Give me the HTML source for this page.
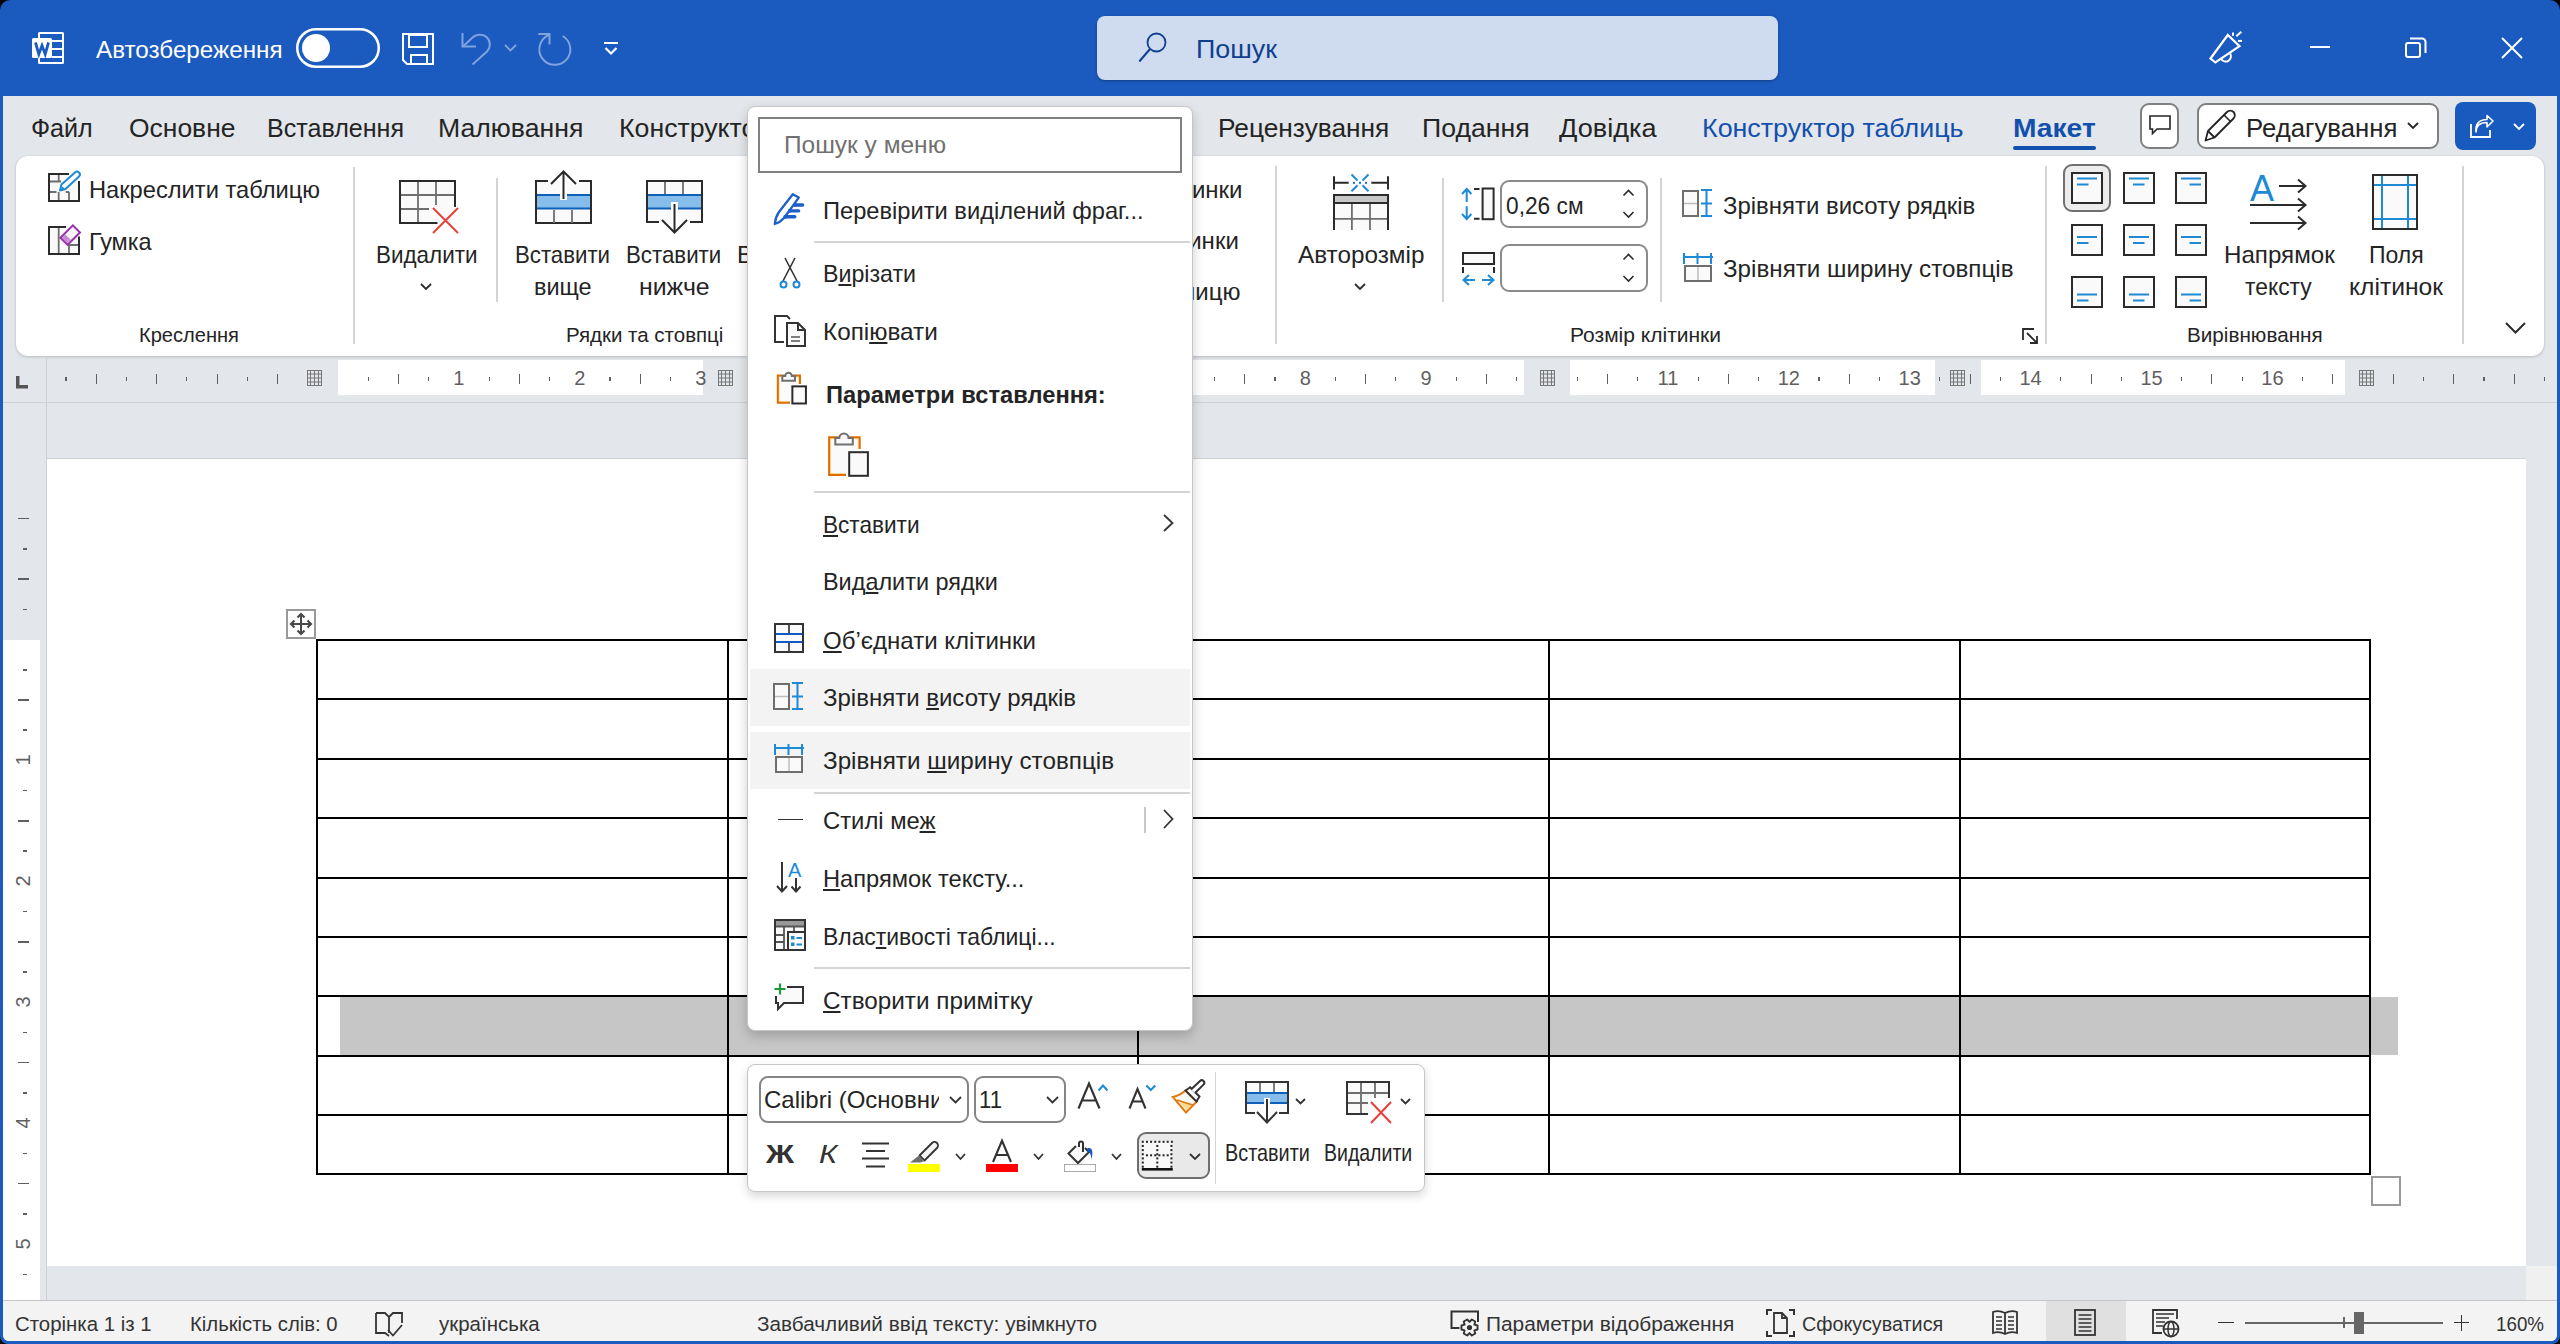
<!DOCTYPE html>
<html><head><meta charset="utf-8"><style>
html,body{margin:0;padding:0;width:2560px;height:1344px;overflow:hidden;background:#000;font-family:"Liberation Sans", sans-serif;}
.t{position:absolute;white-space:nowrap;line-height:1;transform-origin:0 0;}
u{text-decoration:underline;text-decoration-thickness:1.5px;text-underline-offset:2px;}
svg{overflow:visible}

</style></head><body>
<div style="position:absolute;left:0px;top:0px;width:2560px;height:1344px;background:#1b5abf;border-radius:10px 10px 8px 8px;"></div>
<div style="position:absolute;left:3px;top:96px;width:2554px;height:1245px;background:#e3e6ea;border-radius:0 0 6px 6px;overflow:hidden;"></div>
<svg style="position:absolute;left:32px;top:32px;" width="32" height="32" viewBox="0 0 32 32" fill="none">
<rect x="7" y="1" width="24" height="30" stroke="#fff" stroke-width="2" fill="none" rx="0.5"/>
<path d="M20 9 H31 M20 17 H31 M20 25 H31" stroke="#fff" stroke-width="2.2"/>
<rect x="0" y="6" width="20" height="20" rx="1.5" fill="#fff"/>
<path d="M3.5 10.5 L6.8 22.2 L10 13.5 L13.2 22.2 L16.5 10.5" stroke="#1b5abf" stroke-width="2.8" stroke-linejoin="miter" stroke-miterlimit="10"/>
</svg>
<div class="t" style="left:96px;top:38.18px;font-size:24px;color:#ffffff;font-weight:400;transform:scaleX(1.0085);">Автозбереження</div>
<svg style="position:absolute;left:296px;top:28px;" width="84" height="40" viewBox="0 0 84 40" fill="none"><rect x="1.25" y="1.25" width="81.5" height="37.5" rx="18.75" stroke="#fff" stroke-width="2.5"/>
<circle cx="20" cy="20" r="14" fill="#fff"/></svg>
<svg style="position:absolute;left:402px;top:33px;" width="32" height="32" viewBox="0 0 32 32" fill="none"><path d="M1 1 H31 V31 H5 L1 27 Z" stroke="#fff" stroke-width="2"/>
<rect x="7" y="2" width="18" height="12" stroke="#fff" stroke-width="2"/>
<path d="M9 31 V22 H25 V31" stroke="#fff" stroke-width="2"/></svg>
<svg style="position:absolute;left:461px;top:33px;" width="30" height="33" viewBox="0 0 30 33" fill="none"><path d="M1.5 0 V13.5 H15" stroke="#7fa3dc" stroke-width="2"/>
<path d="M2.5 13 L11 5 C15 1 22 0.5 26 4.5 C30 8.5 29.5 15 26 18.5 L11.5 31.5" stroke="#7fa3dc" stroke-width="2"/></svg>
<svg style="position:absolute;left:504px;top:44px;" width="13" height="8" viewBox="0 0 13 8" fill="none"><path d="M1 1 L6.5 6.5 L12 1" stroke="#7fa3dc" stroke-width="1.8"/></svg>
<svg style="position:absolute;left:537px;top:33px;" width="34" height="33" viewBox="0 0 34 33" fill="none"><path d="M1.3 1 H12.5 V11.5" stroke="#7fa3dc" stroke-width="2"/>
<path d="M12 2 A15.5 15.5 0 1 0 25.7 3" stroke="#7fa3dc" stroke-width="2"/></svg>
<svg style="position:absolute;left:604px;top:42px;" width="14" height="14" viewBox="0 0 14 14" fill="none"><line x1="0" y1="1" x2="14" y2="1" stroke="#fff" stroke-width="2"/>
<path d="M1.5 6 L7 11.5 L12.5 6" stroke="#fff" stroke-width="2.2"/></svg>
<div style="position:absolute;left:1097px;top:16px;width:681px;height:64px;background:#cfdcf0;border-radius:8px;box-shadow:0 1px 3px rgba(0,0,0,0.3);"></div>
<svg style="position:absolute;left:1138px;top:32px;" width="30" height="31" viewBox="0 0 30 31" fill="none"><circle cx="18.5" cy="10.5" r="9" stroke="#0f3f8f" stroke-width="1.8"/>
<line x1="12" y1="17" x2="1.3" y2="29.5" stroke="#0f3f8f" stroke-width="2"/></svg>
<div class="t" style="left:1196px;top:35.99px;font-size:26px;color:#0f3f8f;font-weight:400;transform:scaleX(1.0334);">Пошук</div>
<svg style="position:absolute;left:2209px;top:32px;" width="34" height="33" viewBox="0 0 34 33" fill="none"><path d="M1.5 26.5 L18.8 3 L30.5 14.1 L6.4 30.5 Z" stroke="#fff" stroke-width="2.2" stroke-linejoin="miter"/>
<path d="M12.2 27 A5 5 0 1 0 21.2 21.6" stroke="#fff" stroke-width="2"/>
<path d="M24 0.5 V3.8" stroke="#fff" stroke-width="2"/>
<path d="M27.3 4.3 L32.3 -0.2" stroke="#fff" stroke-width="2"/>
<path d="M29 8.9 H33" stroke="#fff" stroke-width="2"/></svg>
<div style="position:absolute;left:2310px;top:46px;width:20px;height:2px;background:#fff;"></div>
<svg style="position:absolute;left:2405px;top:37px;" width="22" height="22" viewBox="0 0 22 22" fill="none"><rect x="1" y="6" width="14" height="14" rx="2" stroke="#fff" stroke-width="2"/>
<path d="M5 1.5 H17 A3.5 3.5 0 0 1 20.5 5 V16" stroke="#fff" stroke-width="2"/></svg>
<svg style="position:absolute;left:2501px;top:37px;" width="22" height="22" viewBox="0 0 22 22" fill="none"><path d="M1 1 L21 21 M21 1 L1 21" stroke="#fff" stroke-width="2"/></svg>
<div class="t" style="left:31px;top:114.70px;font-size:26.7px;color:#242424;font-weight:400;transform:scaleX(0.9404);">Файл</div>
<div class="t" style="left:128.5px;top:114.70px;font-size:26.7px;color:#242424;font-weight:400;transform:scaleX(0.9912);">Основне</div>
<div class="t" style="left:266.5px;top:114.70px;font-size:26.7px;color:#242424;font-weight:400;transform:scaleX(0.9395);">Вставлення</div>
<div class="t" style="left:438px;top:114.70px;font-size:26.7px;color:#242424;font-weight:400;transform:scaleX(0.9979);">Малювання</div>
<div class="t" style="left:619px;top:114.70px;font-size:26.7px;color:#242424;font-weight:400;">Конструктор</div>
<div class="t" style="left:1218px;top:114.70px;font-size:26.7px;color:#242424;font-weight:400;transform:scaleX(0.9847);">Рецензування</div>
<div class="t" style="left:1422px;top:114.70px;font-size:26.7px;color:#242424;font-weight:400;transform:scaleX(0.9983);">Подання</div>
<div class="t" style="left:1558.5px;top:114.70px;font-size:26.7px;color:#242424;font-weight:400;transform:scaleX(1.0156);">Довідка</div>
<div class="t" style="left:1702.4px;top:114.70px;font-size:26.7px;color:#1250ae;font-weight:400;transform:scaleX(1.0054);">Конструктор таблиць</div>
<div class="t" style="left:2012.7px;top:114.70px;font-size:26.7px;color:#1250ae;font-weight:700;transform:scaleX(1.0560);">Макет</div>
<div style="position:absolute;left:2013px;top:146px;width:83px;height:4px;background:#1250ae;border-radius:2px;"></div>
<div style="position:absolute;left:2140px;top:103px;width:39px;height:46px;box-sizing:border-box;border:2px solid #808080;border-radius:9px;background:#fff;"></div>
<svg style="position:absolute;left:2149px;top:115px;" width="22" height="22" viewBox="0 0 22 22" fill="none"><path d="M1 1 H21 V14 H8 L3.5 18.5 V14 H1 Z" stroke="#242424" stroke-width="1.6" stroke-linejoin="miter"/></svg>
<div style="position:absolute;left:2197px;top:103px;width:242px;height:46px;box-sizing:border-box;border:2px solid #808080;border-radius:9px;background:#fff;"></div>
<svg style="position:absolute;left:2204px;top:110px;" width="32" height="32" viewBox="0 0 32 32" fill="none"><path d="M1.5 30.5 L4 21 L23 2 A3.5 3.5 0 0 1 29.5 8.5 L10.5 27.5 Z" stroke="#242424" stroke-width="1.8" stroke-linejoin="round"/>
<line x1="4" y1="21" x2="10.5" y2="27.5" stroke="#242424" stroke-width="1.8"/>
<line x1="20" y1="5" x2="26.5" y2="11.5" stroke="#242424" stroke-width="1.6"/></svg>
<div class="t" style="left:2245.6px;top:114.79px;font-size:26px;color:#242424;font-weight:400;transform:scaleX(0.9897);">Редагування</div>
<svg style="position:absolute;left:2407px;top:122px;" width="12" height="8" viewBox="0 0 12 8" fill="none"><path d="M1 1 L6 6 L11 1" stroke="#242424" stroke-width="1.8"/></svg>
<div style="position:absolute;left:2455px;top:102px;width:81px;height:48px;background:#185abd;border-radius:8px;"></div>
<svg style="position:absolute;left:2470px;top:115px;" width="24" height="23" viewBox="0 0 24 23" fill="none"><path d="M1 9 V22 H20 V15" stroke="#fff" stroke-width="1.8"/>
<path d="M6 17 C6 10 10 7.5 17 7.5 V12 L23 6 L17 0.5 V4.5 C9 4.5 5 9 6 17Z" stroke="#fff" stroke-width="1.6" stroke-linejoin="round"/></svg>
<svg style="position:absolute;left:2513px;top:123px;" width="12" height="8" viewBox="0 0 12 8" fill="none"><path d="M1 1 L6 6 L11 1" stroke="#fff" stroke-width="1.8"/></svg>
<div style="position:absolute;left:16px;top:156px;width:2528px;height:200px;background:#fff;border-radius:12px;box-shadow:0 1px 3px rgba(0,0,0,0.18),0 0 1px rgba(0,0,0,0.15);"></div>
<svg style="position:absolute;left:48px;top:173px;" width="33" height="30" viewBox="0 0 33 30" fill="none"><rect x="1" y="1" width="30" height="27" fill="#fafafa"/>
<path d="M21 1 H1 V28 H31 V8" stroke="#2b2b2b" stroke-width="2"/>
<path d="M10.7 2 V8.5 M2 8.5 H13 M2 19 H8.5 M10.7 19 V27 M17.7 19 H21 M21 19 V27" stroke="#6e6e6e" stroke-width="1.8"/>
<g transform="translate(-0.5,2.5)"><path d="M12.5 15 L14 9 L27.5 -3 A2.6 2.6 0 0 1 31.5 1 L18 13.5 Z" stroke="#1e8ad6" stroke-width="2" fill="#fff" stroke-linejoin="round"/>
<path d="M12.5 15 L15 11 L17 13 Z" fill="#1e8ad6"/></g></svg>
<div class="t" style="left:89px;top:178.08px;font-size:24px;color:#242424;font-weight:400;transform:scaleX(0.9861);">Накреслити таблицю</div>
<svg style="position:absolute;left:48px;top:226px;" width="33" height="29" viewBox="0 0 33 29" fill="none"><rect x="1" y="1" width="30" height="27" fill="#fafafa"/>
<path d="M18 1 H1 V28 H31 V10.5" stroke="#2b2b2b" stroke-width="2"/>
<path d="M10.7 2 V27 M21 19 H30 M21 19 V27" stroke="#6e6e6e" stroke-width="1.8"/>
<path d="M12.5 11.7 L24.9 -0.6 L32 6.5 L19.6 18.8 Z" stroke="#9b2fae" stroke-width="2" fill="#f6f6f6" stroke-linejoin="miter"/>
<path d="M14 11.7 L17.3 8.4 L22.7 13.8 L19.4 17.1 Z" fill="#c98ad6"/></svg>
<div class="t" style="left:89px;top:229.68px;font-size:24px;color:#242424;font-weight:400;transform:scaleX(0.9782);">Гумка</div>
<div class="t" style="left:139px;top:324.65px;font-size:20.5px;color:#242424;font-weight:400;transform:scaleX(0.9794);">Креслення</div>
<div style="position:absolute;left:353px;top:167px;width:2px;height:177px;background:#d4d4d4;"></div>
<svg style="position:absolute;left:399px;top:180px;" width="60" height="55" viewBox="0 0 60 55" fill="none"><rect x="1" y="1" width="55" height="42" fill="#fafafa"/>
<path d="M19 2 V42 M37 2 V25 M2 15 H55 M2 29 H30" stroke="#6e6e6e" stroke-width="1.8"/>
<path d="M56 27 V1 H1 V43 H38.5" stroke="#2b2b2b" stroke-width="2"/>
<path d="M34 28 L59 53 M59 28 L34 53" stroke="#e8403a" stroke-width="2"/></svg>
<div class="t" style="left:376px;top:243.38px;font-size:24px;color:#242424;font-weight:400;transform:scaleX(0.9348);">Видалити</div>
<svg style="position:absolute;left:420px;top:283px;" width="12" height="8" viewBox="0 0 12 8" fill="none"><path d="M1 1 L6 6 L11 1" stroke="#2b2b2b" stroke-width="1.8"/></svg>
<div style="position:absolute;left:496px;top:178px;width:2px;height:124px;background:#d4d4d4;"></div>
<svg style="position:absolute;left:535px;top:170px;" width="57" height="54" viewBox="0 0 57 54" fill="none"><rect x="1" y="11" width="55" height="42" fill="#fafafa"/><path d="M13 11 H1 V53 H56 V11 H44" stroke="#2b2b2b" stroke-width="2"/>
<rect x="2" y="25" width="53" height="14" fill="#86bdea"/>
<path d="M2 25 H55 M2 38.5 H55" stroke="#0d5fb8" stroke-width="2"/>
<path d="M19 40 V53 M37 40 V53" stroke="#6e6e6e" stroke-width="1.8"/>
<rect x="25" y="0" width="7" height="30" fill="#fff"/>
<path d="M28.5 2 V29 M16 14 L28.5 1.5 L41 14" stroke="#2b2b2b" stroke-width="2"/></svg>
<div class="t" style="left:515px;top:243.38px;font-size:24px;color:#242424;font-weight:400;transform:scaleX(0.9256);">Вставити</div>
<div class="t" style="left:534.4px;top:275.08px;font-size:24px;color:#242424;font-weight:400;transform:scaleX(0.9766);">вище</div>
<svg style="position:absolute;left:646px;top:180px;" width="57" height="54" viewBox="0 0 57 54" fill="none"><rect x="1" y="1" width="55" height="42" fill="#fafafa"/><path d="M13 42 H1 V1 H56 V42 H44" stroke="#2b2b2b" stroke-width="2"/>
<rect x="2" y="15" width="53" height="14" fill="#86bdea"/>
<path d="M2 15 H55 M2 28.5 H55" stroke="#0d5fb8" stroke-width="2"/>
<path d="M19 2 V14 M37 2 V14" stroke="#6e6e6e" stroke-width="1.8"/>
<rect x="25" y="22" width="7" height="32" fill="#fff"/>
<path d="M28.5 24 V52 M16 40 L28.5 52.5 L41 40" stroke="#2b2b2b" stroke-width="2"/></svg>
<div class="t" style="left:626.3px;top:243.38px;font-size:24px;color:#242424;font-weight:400;transform:scaleX(0.9276);">Вставити</div>
<div class="t" style="left:639.4px;top:275.08px;font-size:24px;color:#242424;font-weight:400;transform:scaleX(1.0337);">нижче</div>
<div class="t" style="left:737px;top:243.38px;font-size:24px;color:#242424;font-weight:400;">Вставити</div>
<div class="t" style="left:565.6px;top:324.65px;font-size:20.5px;color:#242424;font-weight:400;transform:scaleX(0.9992);">Рядки та стовпці</div>
<div class="t" style="left:1029.7px;top:177.68px;font-size:24px;color:#242424;font-weight:400;">Об’єднати клітинки</div>
<div class="t" style="left:1030.8px;top:228.68px;font-size:24px;color:#242424;font-weight:400;">Розділити клітинки</div>
<div class="t" style="left:1028.3px;top:280.28px;font-size:24px;color:#242424;font-weight:400;">Розділити таблицю</div>
<div style="position:absolute;left:1275px;top:166px;width:2px;height:178px;background:#d4d4d4;"></div>
<svg style="position:absolute;left:1332px;top:174px;" width="58" height="57" viewBox="0 0 58 57" fill="none"><path d="M2 2.2 V15.5 M56 2.2 V15.5 M2 8.8 H16.7 M39.3 8.8 H56" stroke="#2b2b2b" stroke-width="2"/>
<path d="M19.5 0.5 L25.5 6.5 M36.5 0.5 L30.5 6.5 M19.5 17.2 L25.5 11.2 M36.5 17.2 L30.5 11.2" stroke="#1e8ad6" stroke-width="2"/>
<rect x="21" y="7.8" width="2" height="2" fill="#0d6fc8"/><rect x="27" y="7.8" width="2" height="2" fill="#0d6fc8"/><rect x="33" y="7.8" width="2" height="2" fill="#0d6fc8"/>
<rect x="2" y="21" width="54" height="35" fill="#fafafa"/>
<rect x="2" y="21" width="54" height="8" fill="#c8c8c8"/>
<path d="M1 21.1 H57 M2 28.9 H56" stroke="#2b2b2b" stroke-width="2"/>
<path d="M2 20 V56 M56 20 V56" stroke="#2b2b2b" stroke-width="2"/>
<path d="M19.9 30 V56 M38 30 V56 M3 44.8 H55" stroke="#6e6e6e" stroke-width="1.8"/></svg>
<div class="t" style="left:1297.6px;top:243.08px;font-size:24px;color:#242424;font-weight:400;transform:scaleX(1.0119);">Авторозмір</div>
<svg style="position:absolute;left:1354px;top:283px;" width="12" height="8" viewBox="0 0 12 8" fill="none"><path d="M1 1 L6 6 L11 1" stroke="#2b2b2b" stroke-width="1.8"/></svg>
<div style="position:absolute;left:1442px;top:178px;width:2px;height:124px;background:#d4d4d4;"></div>
<svg style="position:absolute;left:1461px;top:187px;" width="34" height="34" viewBox="0 0 34 34" fill="none"><path d="M5.7 2.5 V15 M1 7 L5.7 2 L10.4 7 M5.7 19.2 V31.5 M1 27 L5.7 32 L10.4 27" stroke="#1e8ad6" stroke-width="2"/>
<path d="M13 2 H18.5 M13 31.7 H18.5" stroke="#2b2b2b" stroke-width="2"/>
<rect x="21.6" y="1.5" width="11" height="30.7" stroke="#2b2b2b" stroke-width="2" fill="#fafafa"/></svg>
<div style="position:absolute;left:1500px;top:180px;width:148px;height:48px;box-sizing:border-box;border:2px solid #8a8a8a;border-radius:9px;background:#fff;"></div>
<div class="t" style="left:1505.5px;top:193.98px;font-size:24px;color:#242424;font-weight:400;transform:scaleX(0.9465);">0,26 см</div>
<svg style="position:absolute;left:1622px;top:189px;" width="13" height="30" viewBox="0 0 13 30" fill="none"><path d="M1.5 6.5 L6.5 1.5 L11.5 6.5 M1.5 23 L6.5 28 L11.5 23" stroke="#2b2b2b" stroke-width="1.6"/></svg>
<svg style="position:absolute;left:1461px;top:252px;" width="34" height="33" viewBox="0 0 34 33" fill="none"><rect x="2" y="1" width="31" height="11" stroke="#2b2b2b" stroke-width="2" fill="#fafafa"/>
<path d="M2 15 V21 M33 15 V21" stroke="#2b2b2b" stroke-width="2"/>
<path d="M3 28 H14 M21 28 H32 M8 23 L2.5 28 L8 33 M27 23 L32.5 28 L27 33" stroke="#1e8ad6" stroke-width="2"/></svg>
<div style="position:absolute;left:1500px;top:244px;width:148px;height:48px;box-sizing:border-box;border:2px solid #8a8a8a;border-radius:9px;background:#fff;"></div>
<svg style="position:absolute;left:1622px;top:253px;" width="13" height="30" viewBox="0 0 13 30" fill="none"><path d="M1.5 6.5 L6.5 1.5 L11.5 6.5 M1.5 23 L6.5 28 L11.5 23" stroke="#2b2b2b" stroke-width="1.6"/></svg>
<div style="position:absolute;left:1660px;top:178px;width:2px;height:124px;background:#d4d4d4;"></div>
<svg style="position:absolute;left:1682px;top:188px;" width="31" height="30" viewBox="0 0 31 30" fill="none"><rect x="1" y="3" width="15" height="25" stroke="#6e6e6e" stroke-width="2" fill="#fafafa"/>
<path d="M2 15.5 H15" stroke="#bdbdbd" stroke-width="1.5"/>
<path d="M24.5 1 V29 M19 2 H30 M19 15.5 H30 M19 28 H30" stroke="#1e8ad6" stroke-width="2"/></svg>
<div class="t" style="left:1722.5px;top:193.68px;font-size:24px;color:#242424;font-weight:400;transform:scaleX(0.9969);">Зрівняти висоту рядків</div>
<svg style="position:absolute;left:1682px;top:252px;" width="31" height="30" viewBox="0 0 31 30" fill="none"><rect x="3" y="14" width="26" height="15" stroke="#6e6e6e" stroke-width="2" fill="#fafafa"/>
<path d="M16 15 V28" stroke="#bdbdbd" stroke-width="1.5"/>
<path d="M1 5 H31 M2 1 V12 M15.5 1 V12 M29 1 V12" stroke="#1e8ad6" stroke-width="2"/></svg>
<div class="t" style="left:1722.5px;top:257.18px;font-size:24px;color:#242424;font-weight:400;transform:scaleX(1.0079);">Зрівняти ширину стовпців</div>
<div class="t" style="left:1570px;top:324.95px;font-size:20.5px;color:#242424;font-weight:400;transform:scaleX(1.0245);">Розмір клітинки</div>
<svg style="position:absolute;left:2022px;top:328px;" width="17" height="16" viewBox="0 0 17 16" fill="none"><path d="M1 12 V1 H12 M5 5 L15 15 M8 15 H15 V8" stroke="#2b2b2b" stroke-width="1.8"/></svg>
<div style="position:absolute;left:2045px;top:166px;width:2px;height:178px;background:#d4d4d4;"></div>
<div style="position:absolute;left:2063px;top:164px;width:48px;height:48px;box-sizing:border-box;border:2px solid #707070;border-radius:9px;background:#ececec;"></div>
<svg style="position:absolute;left:2071px;top:172px;" width="32" height="32" viewBox="0 0 32 32" fill="none"><rect x="1" y="1" width="30" height="30" stroke="#2b2b2b" stroke-width="2" fill="#fafafa"/>
<path d="M6 6.5 H26 M6 12.5 H17.5" stroke="#1e8ad6" stroke-width="2"/></svg>
<svg style="position:absolute;left:2123px;top:172px;" width="32" height="32" viewBox="0 0 32 32" fill="none"><rect x="1" y="1" width="30" height="30" stroke="#2b2b2b" stroke-width="2" fill="#fafafa"/>
<path d="M6 6.5 H26 M10 12.5 H21.5" stroke="#1e8ad6" stroke-width="2"/></svg>
<svg style="position:absolute;left:2175px;top:172px;" width="32" height="32" viewBox="0 0 32 32" fill="none"><rect x="1" y="1" width="30" height="30" stroke="#2b2b2b" stroke-width="2" fill="#fafafa"/>
<path d="M6 6.5 H26 M14.5 12.5 H26" stroke="#1e8ad6" stroke-width="2"/></svg>
<svg style="position:absolute;left:2071px;top:224px;" width="32" height="32" viewBox="0 0 32 32" fill="none"><rect x="1" y="1" width="30" height="30" stroke="#2b2b2b" stroke-width="2" fill="#fafafa"/>
<path d="M6 13 H26 M6 19 H17.5" stroke="#1e8ad6" stroke-width="2"/></svg>
<svg style="position:absolute;left:2123px;top:224px;" width="32" height="32" viewBox="0 0 32 32" fill="none"><rect x="1" y="1" width="30" height="30" stroke="#2b2b2b" stroke-width="2" fill="#fafafa"/>
<path d="M6 13 H26 M10 19 H21.5" stroke="#1e8ad6" stroke-width="2"/></svg>
<svg style="position:absolute;left:2175px;top:224px;" width="32" height="32" viewBox="0 0 32 32" fill="none"><rect x="1" y="1" width="30" height="30" stroke="#2b2b2b" stroke-width="2" fill="#fafafa"/>
<path d="M6 13 H26 M14.5 19 H26" stroke="#1e8ad6" stroke-width="2"/></svg>
<svg style="position:absolute;left:2071px;top:276px;" width="32" height="32" viewBox="0 0 32 32" fill="none"><rect x="1" y="1" width="30" height="30" stroke="#2b2b2b" stroke-width="2" fill="#fafafa"/>
<path d="M6 18.5 H26 M6 24.5 H17.5" stroke="#1e8ad6" stroke-width="2"/></svg>
<svg style="position:absolute;left:2123px;top:276px;" width="32" height="32" viewBox="0 0 32 32" fill="none"><rect x="1" y="1" width="30" height="30" stroke="#2b2b2b" stroke-width="2" fill="#fafafa"/>
<path d="M6 18.5 H26 M10 24.5 H21.5" stroke="#1e8ad6" stroke-width="2"/></svg>
<svg style="position:absolute;left:2175px;top:276px;" width="32" height="32" viewBox="0 0 32 32" fill="none"><rect x="1" y="1" width="30" height="30" stroke="#2b2b2b" stroke-width="2" fill="#fafafa"/>
<path d="M6 18.5 H26 M14.5 24.5 H26" stroke="#1e8ad6" stroke-width="2"/></svg>
<svg style="position:absolute;left:2250px;top:172px;" width="58" height="58" viewBox="0 0 58 58" fill="none"><text x="0" y="28.5" font-family="Liberation Sans" font-size="36" fill="#1e8ad6">A</text>
<path d="M29 14 H55 M48 7.5 L55.5 14 L48 20.5" stroke="#2b2b2b" stroke-width="2"/>
<path d="M0 33 H55 M48 26.5 L55.5 33 L48 39.5" stroke="#2b2b2b" stroke-width="2"/>
<path d="M0 51 H55 M48 44.5 L55.5 51 L48 57.5" stroke="#2b2b2b" stroke-width="2"/></svg>
<div class="t" style="left:2224px;top:243.48px;font-size:24px;color:#242424;font-weight:400;transform:scaleX(1.0055);">Напрямок</div>
<div class="t" style="left:2245px;top:275.18px;font-size:24px;color:#242424;font-weight:400;transform:scaleX(0.9515);">тексту</div>
<svg style="position:absolute;left:2372px;top:174px;" width="46" height="56" viewBox="0 0 46 56" fill="none"><rect x="1" y="1" width="44" height="54" stroke="#2b2b2b" stroke-width="2" fill="#fafafa"/>
<path d="M10 2 V54 M36 2 V54 M2 11 H44 M2 45 H44" stroke="#1e8ad6" stroke-width="2"/></svg>
<div class="t" style="left:2368.6px;top:243.48px;font-size:24px;color:#242424;font-weight:400;transform:scaleX(0.9585);">Поля</div>
<div class="t" style="left:2349px;top:275.18px;font-size:24px;color:#242424;font-weight:400;transform:scaleX(1.0261);">клітинок</div>
<div class="t" style="left:2187px;top:325.15px;font-size:20.5px;color:#242424;font-weight:400;transform:scaleX(1.0091);">Вирівнювання</div>
<div style="position:absolute;left:2462px;top:166px;width:2px;height:178px;background:#d4d4d4;"></div>
<svg style="position:absolute;left:2505px;top:322px;" width="21" height="12" viewBox="0 0 21 12" fill="none"><path d="M1 1 L10.5 10.5 L20 1" stroke="#2b2b2b" stroke-width="2"/></svg>
<div style="position:absolute;left:46px;top:356px;width:1px;height:944px;background:#cfd0d2;"></div>
<div style="position:absolute;left:3px;top:402px;width:2554px;height:1px;background:#cfd0d2;"></div>
<svg style="position:absolute;left:16px;top:376px;" width="12" height="13" viewBox="0 0 12 13" fill="none"><path d="M0 0 H3.5 V9 H12 V12.5 H0 Z" fill="#555"/></svg>
<div style="position:absolute;left:338px;top:360px;width:365px;height:35px;background:#fff;"></div>
<div style="position:absolute;left:749px;top:360px;width:365px;height:35px;background:#fff;"></div>
<div style="position:absolute;left:1160px;top:360px;width:364px;height:35px;background:#fff;"></div>
<div style="position:absolute;left:1570px;top:360px;width:365px;height:35px;background:#fff;"></div>
<div style="position:absolute;left:1981px;top:360px;width:364px;height:35px;background:#fff;"></div>
<div style="position:absolute;left:65.4px;top:377px;width:1.2px;height:4px;background:#5f5f5f;"></div>
<div style="position:absolute;left:95.6px;top:373.5px;width:1.2px;height:10px;background:#5f5f5f;"></div>
<div style="position:absolute;left:125.8px;top:377px;width:1.2px;height:4px;background:#5f5f5f;"></div>
<div style="position:absolute;left:156.0px;top:373.5px;width:1.2px;height:10px;background:#5f5f5f;"></div>
<div style="position:absolute;left:186.3px;top:377px;width:1.2px;height:4px;background:#5f5f5f;"></div>
<div style="position:absolute;left:216.5px;top:373.5px;width:1.2px;height:10px;background:#5f5f5f;"></div>
<div style="position:absolute;left:246.7px;top:377px;width:1.2px;height:4px;background:#5f5f5f;"></div>
<div style="position:absolute;left:276.9px;top:373.5px;width:1.2px;height:10px;background:#5f5f5f;"></div>
<div style="position:absolute;left:367.6px;top:377px;width:1.2px;height:4px;background:#5f5f5f;"></div>
<div style="position:absolute;left:397.8px;top:373.5px;width:1.2px;height:10px;background:#5f5f5f;"></div>
<div style="position:absolute;left:428.1px;top:377px;width:1.2px;height:4px;background:#5f5f5f;"></div>
<div class="t" style="left:428.9px;top:368px;width:60px;text-align:center;font-size:20px;color:#5f5f5f;">1</div>
<div style="position:absolute;left:488.5px;top:377px;width:1.2px;height:4px;background:#5f5f5f;"></div>
<div style="position:absolute;left:518.8px;top:373.5px;width:1.2px;height:10px;background:#5f5f5f;"></div>
<div style="position:absolute;left:549.0px;top:377px;width:1.2px;height:4px;background:#5f5f5f;"></div>
<div class="t" style="left:549.8px;top:368px;width:60px;text-align:center;font-size:20px;color:#5f5f5f;">2</div>
<div style="position:absolute;left:609.4px;top:377px;width:1.2px;height:4px;background:#5f5f5f;"></div>
<div style="position:absolute;left:639.6px;top:373.5px;width:1.2px;height:10px;background:#5f5f5f;"></div>
<div style="position:absolute;left:669.9px;top:377px;width:1.2px;height:4px;background:#5f5f5f;"></div>
<div class="t" style="left:670.7px;top:368px;width:60px;text-align:center;font-size:20px;color:#5f5f5f;">3</div>
<div style="position:absolute;left:760.6px;top:373.5px;width:1.2px;height:10px;background:#5f5f5f;"></div>
<div style="position:absolute;left:790.8px;top:377px;width:1.2px;height:4px;background:#5f5f5f;"></div>
<div class="t" style="left:791.6px;top:368px;width:60px;text-align:center;font-size:20px;color:#5f5f5f;">4</div>
<div style="position:absolute;left:851.2px;top:377px;width:1.2px;height:4px;background:#5f5f5f;"></div>
<div style="position:absolute;left:881.5px;top:373.5px;width:1.2px;height:10px;background:#5f5f5f;"></div>
<div style="position:absolute;left:911.7px;top:377px;width:1.2px;height:4px;background:#5f5f5f;"></div>
<div class="t" style="left:912.5px;top:368px;width:60px;text-align:center;font-size:20px;color:#5f5f5f;">5</div>
<div style="position:absolute;left:972.1px;top:377px;width:1.2px;height:4px;background:#5f5f5f;"></div>
<div style="position:absolute;left:1002.4px;top:373.5px;width:1.2px;height:10px;background:#5f5f5f;"></div>
<div style="position:absolute;left:1032.6px;top:377px;width:1.2px;height:4px;background:#5f5f5f;"></div>
<div class="t" style="left:1033.4px;top:368px;width:60px;text-align:center;font-size:20px;color:#5f5f5f;">6</div>
<div style="position:absolute;left:1093.0px;top:377px;width:1.2px;height:4px;background:#5f5f5f;"></div>
<div style="position:absolute;left:1123.2px;top:373.5px;width:1.2px;height:10px;background:#5f5f5f;"></div>
<div style="position:absolute;left:1153.5px;top:377px;width:1.2px;height:4px;background:#5f5f5f;"></div>
<div class="t" style="left:1154.3px;top:368px;width:60px;text-align:center;font-size:20px;color:#5f5f5f;">7</div>
<div style="position:absolute;left:1213.9px;top:377px;width:1.2px;height:4px;background:#5f5f5f;"></div>
<div style="position:absolute;left:1244.2px;top:373.5px;width:1.2px;height:10px;background:#5f5f5f;"></div>
<div style="position:absolute;left:1274.4px;top:377px;width:1.2px;height:4px;background:#5f5f5f;"></div>
<div class="t" style="left:1275.2px;top:368px;width:60px;text-align:center;font-size:20px;color:#5f5f5f;">8</div>
<div style="position:absolute;left:1334.8px;top:377px;width:1.2px;height:4px;background:#5f5f5f;"></div>
<div style="position:absolute;left:1365.1px;top:373.5px;width:1.2px;height:10px;background:#5f5f5f;"></div>
<div style="position:absolute;left:1395.3px;top:377px;width:1.2px;height:4px;background:#5f5f5f;"></div>
<div class="t" style="left:1396.1px;top:368px;width:60px;text-align:center;font-size:20px;color:#5f5f5f;">9</div>
<div style="position:absolute;left:1455.7px;top:377px;width:1.2px;height:4px;background:#5f5f5f;"></div>
<div style="position:absolute;left:1486.0px;top:373.5px;width:1.2px;height:10px;background:#5f5f5f;"></div>
<div style="position:absolute;left:1516.2px;top:377px;width:1.2px;height:4px;background:#5f5f5f;"></div>
<div style="position:absolute;left:1576.6px;top:377px;width:1.2px;height:4px;background:#5f5f5f;"></div>
<div style="position:absolute;left:1606.9px;top:373.5px;width:1.2px;height:10px;background:#5f5f5f;"></div>
<div style="position:absolute;left:1637.1px;top:377px;width:1.2px;height:4px;background:#5f5f5f;"></div>
<div class="t" style="left:1637.9px;top:368px;width:60px;text-align:center;font-size:20px;color:#5f5f5f;">11</div>
<div style="position:absolute;left:1697.5px;top:377px;width:1.2px;height:4px;background:#5f5f5f;"></div>
<div style="position:absolute;left:1727.8px;top:373.5px;width:1.2px;height:10px;background:#5f5f5f;"></div>
<div style="position:absolute;left:1758.0px;top:377px;width:1.2px;height:4px;background:#5f5f5f;"></div>
<div class="t" style="left:1758.8px;top:368px;width:60px;text-align:center;font-size:20px;color:#5f5f5f;">12</div>
<div style="position:absolute;left:1818.4px;top:377px;width:1.2px;height:4px;background:#5f5f5f;"></div>
<div style="position:absolute;left:1848.7px;top:373.5px;width:1.2px;height:10px;background:#5f5f5f;"></div>
<div style="position:absolute;left:1878.9px;top:377px;width:1.2px;height:4px;background:#5f5f5f;"></div>
<div class="t" style="left:1879.7px;top:368px;width:60px;text-align:center;font-size:20px;color:#5f5f5f;">13</div>
<div style="position:absolute;left:1939.3px;top:377px;width:1.2px;height:4px;background:#5f5f5f;"></div>
<div style="position:absolute;left:1969.6px;top:373.5px;width:1.2px;height:10px;background:#5f5f5f;"></div>
<div style="position:absolute;left:1999.8px;top:377px;width:1.2px;height:4px;background:#5f5f5f;"></div>
<div class="t" style="left:2000.6px;top:368px;width:60px;text-align:center;font-size:20px;color:#5f5f5f;">14</div>
<div style="position:absolute;left:2060.2px;top:377px;width:1.2px;height:4px;background:#5f5f5f;"></div>
<div style="position:absolute;left:2090.5px;top:373.5px;width:1.2px;height:10px;background:#5f5f5f;"></div>
<div style="position:absolute;left:2120.7px;top:377px;width:1.2px;height:4px;background:#5f5f5f;"></div>
<div class="t" style="left:2121.5px;top:368px;width:60px;text-align:center;font-size:20px;color:#5f5f5f;">15</div>
<div style="position:absolute;left:2181.1px;top:377px;width:1.2px;height:4px;background:#5f5f5f;"></div>
<div style="position:absolute;left:2211.3px;top:373.5px;width:1.2px;height:10px;background:#5f5f5f;"></div>
<div style="position:absolute;left:2241.6px;top:377px;width:1.2px;height:4px;background:#5f5f5f;"></div>
<div class="t" style="left:2242.4px;top:368px;width:60px;text-align:center;font-size:20px;color:#5f5f5f;">16</div>
<div style="position:absolute;left:2302.0px;top:377px;width:1.2px;height:4px;background:#5f5f5f;"></div>
<div style="position:absolute;left:2332.3px;top:373.5px;width:1.2px;height:10px;background:#5f5f5f;"></div>
<div style="position:absolute;left:2392.7px;top:373.5px;width:1.2px;height:10px;background:#5f5f5f;"></div>
<div style="position:absolute;left:2422.9px;top:377px;width:1.2px;height:4px;background:#5f5f5f;"></div>
<div style="position:absolute;left:2453.2px;top:373.5px;width:1.2px;height:10px;background:#5f5f5f;"></div>
<div style="position:absolute;left:2483.4px;top:377px;width:1.2px;height:4px;background:#5f5f5f;"></div>
<div style="position:absolute;left:2513.6px;top:373.5px;width:1.2px;height:10px;background:#5f5f5f;"></div>
<div style="position:absolute;left:2543.8px;top:377px;width:1.2px;height:4px;background:#5f5f5f;"></div>
<svg style="position:absolute;left:307px;top:370px;" width="15" height="16" viewBox="0 0 15 16" fill="none"><rect x="0.5" y="0.5" width="14" height="15" fill="none" stroke="#777" stroke-width="1"/>
<path d="M3.5 0 V16 M7.5 0 V16 M11.5 0 V16 M0 4 H15 M0 8 H15 M0 12 H15" stroke="#777" stroke-width="1"/></svg>
<svg style="position:absolute;left:718px;top:370px;" width="15" height="16" viewBox="0 0 15 16" fill="none"><rect x="0.5" y="0.5" width="14" height="15" fill="none" stroke="#777" stroke-width="1"/>
<path d="M3.5 0 V16 M7.5 0 V16 M11.5 0 V16 M0 4 H15 M0 8 H15 M0 12 H15" stroke="#777" stroke-width="1"/></svg>
<svg style="position:absolute;left:1130px;top:370px;" width="15" height="16" viewBox="0 0 15 16" fill="none"><rect x="0.5" y="0.5" width="14" height="15" fill="none" stroke="#777" stroke-width="1"/>
<path d="M3.5 0 V16 M7.5 0 V16 M11.5 0 V16 M0 4 H15 M0 8 H15 M0 12 H15" stroke="#777" stroke-width="1"/></svg>
<svg style="position:absolute;left:1540px;top:370px;" width="15" height="16" viewBox="0 0 15 16" fill="none"><rect x="0.5" y="0.5" width="14" height="15" fill="none" stroke="#777" stroke-width="1"/>
<path d="M3.5 0 V16 M7.5 0 V16 M11.5 0 V16 M0 4 H15 M0 8 H15 M0 12 H15" stroke="#777" stroke-width="1"/></svg>
<svg style="position:absolute;left:1950px;top:370px;" width="15" height="16" viewBox="0 0 15 16" fill="none"><rect x="0.5" y="0.5" width="14" height="15" fill="none" stroke="#777" stroke-width="1"/>
<path d="M3.5 0 V16 M7.5 0 V16 M11.5 0 V16 M0 4 H15 M0 8 H15 M0 12 H15" stroke="#777" stroke-width="1"/></svg>
<svg style="position:absolute;left:2359px;top:370px;" width="15" height="16" viewBox="0 0 15 16" fill="none"><rect x="0.5" y="0.5" width="14" height="15" fill="none" stroke="#777" stroke-width="1"/>
<path d="M3.5 0 V16 M7.5 0 V16 M11.5 0 V16 M0 4 H15 M0 8 H15 M0 12 H15" stroke="#777" stroke-width="1"/></svg>
<div style="position:absolute;left:3px;top:640px;width:37px;height:660px;background:#fff;"></div>
<div style="position:absolute;left:18px;top:517.9px;width:11px;height:1.5px;background:#5f5f5f;"></div>
<div style="position:absolute;left:23px;top:548.1px;width:4px;height:1.5px;background:#5f5f5f;"></div>
<div style="position:absolute;left:18px;top:578.3px;width:11px;height:1.5px;background:#5f5f5f;"></div>
<div style="position:absolute;left:23px;top:608.5px;width:4px;height:1.5px;background:#5f5f5f;"></div>
<div style="position:absolute;left:23px;top:669.0px;width:4px;height:1.5px;background:#5f5f5f;"></div>
<div style="position:absolute;left:18px;top:699.2px;width:11px;height:1.5px;background:#5f5f5f;"></div>
<div style="position:absolute;left:23px;top:729.4px;width:4px;height:1.5px;background:#5f5f5f;"></div>
<div class="t" style="left:-7px;top:750.4px;width:60px;text-align:center;font-size:20px;color:#5f5f5f;transform:rotate(-90deg);transform-origin:30px 10px;">1</div>
<div style="position:absolute;left:23px;top:789.9px;width:4px;height:1.5px;background:#5f5f5f;"></div>
<div style="position:absolute;left:18px;top:820.1px;width:11px;height:1.5px;background:#5f5f5f;"></div>
<div style="position:absolute;left:23px;top:850.3px;width:4px;height:1.5px;background:#5f5f5f;"></div>
<div class="t" style="left:-7px;top:871.3px;width:60px;text-align:center;font-size:20px;color:#5f5f5f;transform:rotate(-90deg);transform-origin:30px 10px;">2</div>
<div style="position:absolute;left:23px;top:910.8px;width:4px;height:1.5px;background:#5f5f5f;"></div>
<div style="position:absolute;left:18px;top:941.0px;width:11px;height:1.5px;background:#5f5f5f;"></div>
<div style="position:absolute;left:23px;top:971.2px;width:4px;height:1.5px;background:#5f5f5f;"></div>
<div class="t" style="left:-7px;top:992.2px;width:60px;text-align:center;font-size:20px;color:#5f5f5f;transform:rotate(-90deg);transform-origin:30px 10px;">3</div>
<div style="position:absolute;left:23px;top:1031.7px;width:4px;height:1.5px;background:#5f5f5f;"></div>
<div style="position:absolute;left:18px;top:1061.9px;width:11px;height:1.5px;background:#5f5f5f;"></div>
<div style="position:absolute;left:23px;top:1092.1px;width:4px;height:1.5px;background:#5f5f5f;"></div>
<div class="t" style="left:-7px;top:1113.1px;width:60px;text-align:center;font-size:20px;color:#5f5f5f;transform:rotate(-90deg);transform-origin:30px 10px;">4</div>
<div style="position:absolute;left:23px;top:1152.6px;width:4px;height:1.5px;background:#5f5f5f;"></div>
<div style="position:absolute;left:18px;top:1182.8px;width:11px;height:1.5px;background:#5f5f5f;"></div>
<div style="position:absolute;left:23px;top:1213.0px;width:4px;height:1.5px;background:#5f5f5f;"></div>
<div class="t" style="left:-7px;top:1234.0px;width:60px;text-align:center;font-size:20px;color:#5f5f5f;transform:rotate(-90deg);transform-origin:30px 10px;">5</div>
<div style="position:absolute;left:23px;top:1273.5px;width:4px;height:1.5px;background:#5f5f5f;"></div>
<div style="position:absolute;left:47px;top:459px;width:2479px;height:807px;background:#fff;"></div>
<div style="position:absolute;left:46px;top:458px;width:2480px;height:1px;background:#cfd0d2;"></div>
<div style="position:absolute;left:2526px;top:1266px;width:31px;height:34px;background:#f0f0f0;"></div>
<div style="position:absolute;left:340px;top:997px;width:2058px;height:58px;background:#c6c6c6;"></div>
<div style="position:absolute;left:316px;top:639px;width:2055px;height:2px;background:#000;"></div>
<div style="position:absolute;left:316px;top:698px;width:2055px;height:2px;background:#000;"></div>
<div style="position:absolute;left:316px;top:758px;width:2055px;height:2px;background:#000;"></div>
<div style="position:absolute;left:316px;top:817px;width:2055px;height:2px;background:#000;"></div>
<div style="position:absolute;left:316px;top:877px;width:2055px;height:2px;background:#000;"></div>
<div style="position:absolute;left:316px;top:936px;width:2055px;height:2px;background:#000;"></div>
<div style="position:absolute;left:316px;top:995px;width:2055px;height:2px;background:#000;"></div>
<div style="position:absolute;left:316px;top:1055px;width:2055px;height:2px;background:#000;"></div>
<div style="position:absolute;left:316px;top:1114px;width:2055px;height:2px;background:#000;"></div>
<div style="position:absolute;left:316px;top:1173px;width:2055px;height:2px;background:#000;"></div>
<div style="position:absolute;left:316px;top:639px;width:2px;height:536px;background:#000;"></div>
<div style="position:absolute;left:727px;top:639px;width:2px;height:536px;background:#000;"></div>
<div style="position:absolute;left:1137px;top:639px;width:2px;height:536px;background:#000;"></div>
<div style="position:absolute;left:1548px;top:639px;width:2px;height:536px;background:#000;"></div>
<div style="position:absolute;left:1959px;top:639px;width:2px;height:536px;background:#000;"></div>
<div style="position:absolute;left:2369px;top:639px;width:2px;height:536px;background:#000;"></div>
<svg style="position:absolute;left:286px;top:609px;" width="30" height="30" viewBox="0 0 30 30" fill="none"><rect x="1" y="1" width="28" height="28" stroke="#999" stroke-width="2" fill="#fff"/>
<path d="M15 5 V25 M5 15 H25" stroke="#4a4a4a" stroke-width="2"/>
<path d="M11.5 8.5 L15 5 L18.5 8.5 M11.5 21.5 L15 25 L18.5 21.5 M8.5 11.5 L5 15 L8.5 18.5 M21.5 11.5 L25 15 L21.5 18.5" stroke="#4a4a4a" stroke-width="2.2"/></svg>
<div style="position:absolute;left:2371px;top:1176px;width:30px;height:30px;box-sizing:border-box;border:2px solid #999;background:#fff;"></div>
<div style="position:absolute;left:3px;top:1300px;width:2554px;height:2px;background:#c8c6c4;"></div>
<div style="position:absolute;left:3px;top:1301px;width:2554px;height:40px;background:#f3f3f3;border-radius:0 0 6px 6px;"></div>
<div class="t" style="left:15.3px;top:1314.25px;font-size:20.5px;color:#333;font-weight:400;transform:scaleX(0.9956);">Сторінка 1 із 1</div>
<div class="t" style="left:190px;top:1314.25px;font-size:20.5px;color:#333;font-weight:400;transform:scaleX(0.9898);">Кількість слів: 0</div>
<svg style="position:absolute;left:375px;top:1311px;" width="28" height="26" viewBox="0 0 28 26" fill="none"><path d="M1 2 H10 L14 6 L18 2 H27 V12 M14 6 V22 M1 2 V22 H10 L14 25" stroke="#333" stroke-width="1.8" stroke-linejoin="miter"/>
<path d="M13 19 L18 24.5 L27 14" stroke="#333" stroke-width="1.8"/></svg>
<div class="t" style="left:438.6px;top:1314.25px;font-size:20.5px;color:#333;font-weight:400;transform:scaleX(0.9991);">українська</div>
<div class="t" style="left:757px;top:1314.25px;font-size:20.5px;color:#333;font-weight:400;transform:scaleX(1.0107);">Завбачливий ввід тексту: увімкнуто</div>
<svg style="position:absolute;left:1450px;top:1310px;" width="30" height="28" viewBox="0 0 30 28" fill="none"><path d="M9.5 18 H1.5 V1.5 H28 V12" stroke="#333" stroke-width="2"/>
<path d="M27.55 15.49 L27.55 19.51 L24.35 20.30 L25.27 23.47 L21.79 25.48 L19.50 23.10 L17.21 25.48 L13.73 23.47 L14.65 20.30 L11.45 19.51 L11.45 15.49 L14.65 14.70 L13.73 11.53 L17.21 9.52 L19.50 11.90 L21.79 9.52 L25.27 11.53 L24.35 14.70 Z" stroke="#333" stroke-width="1.9" fill="#f3f3f3" stroke-linejoin="round"/>
<circle cx="19.5" cy="17.5" r="2.6" fill="#333"/></svg>
<div class="t" style="left:1485.6px;top:1314.25px;font-size:20.5px;color:#333;font-weight:400;transform:scaleX(1.0185);">Параметри відображення</div>
<svg style="position:absolute;left:1766px;top:1309px;" width="29" height="28" viewBox="0 0 29 28" fill="none"><path d="M1 6 V1 H6 M23 1 H28 V6 M28 22 V27 H23 M6 27 H1 V22" stroke="#333" stroke-width="2"/>
<path d="M8 4 H16 L21 9 V24 H8 Z M16 4 V9 H21" stroke="#333" stroke-width="1.8" stroke-linejoin="miter"/></svg>
<div class="t" style="left:1801.7px;top:1314.25px;font-size:20.5px;color:#333;font-weight:400;transform:scaleX(0.9632);">Сфокусуватися</div>
<svg style="position:absolute;left:1992px;top:1309px;" width="26" height="26" viewBox="0 0 26 26" fill="none"><path d="M1 3 Q7 1 13 4 Q19 1 25 3 V24 Q19 22 13 25 Q7 22 1 24 Z M13 4 V25" stroke="#333" stroke-width="1.8"/>
<path d="M4 8 H10 M4 12 H10 M4 16 H10 M4 20 H10 M16 8 H22 M16 12 H22 M16 16 H22 M16 20 H22" stroke="#333" stroke-width="1.6"/></svg>
<div style="position:absolute;left:2046px;top:1301px;width:80px;height:40px;background:#e0e0e0;"></div>
<svg style="position:absolute;left:2074px;top:1309px;" width="22" height="27" viewBox="0 0 22 27" fill="none"><rect x="1" y="1" width="20" height="25" stroke="#333" stroke-width="1.8"/>
<path d="M4.5 6 H17.5 M4.5 10 H17.5 M4.5 14 H17.5 M4.5 18 H17.5 M4.5 22 H17.5" stroke="#333" stroke-width="1.6"/></svg>
<svg style="position:absolute;left:2152px;top:1309px;" width="28" height="28" viewBox="0 0 28 28" fill="none"><path d="M10 24 H1 V1 H25 V10" stroke="#333" stroke-width="1.8"/>
<path d="M4 5 H22 M4 9 H17 M4 13 H13 M4 17 H11" stroke="#333" stroke-width="1.6"/>
<circle cx="19" cy="20" r="7.5" stroke="#333" stroke-width="1.8"/>
<ellipse cx="19" cy="20" rx="3" ry="7.5" stroke="#333" stroke-width="1.5"/>
<path d="M11.5 20 H26.5" stroke="#333" stroke-width="1.5"/></svg>
<div style="position:absolute;left:2218px;top:1321.5px;width:15.5px;height:1.6px;background:#333;"></div>
<div style="position:absolute;left:2245px;top:1321.7px;width:198px;height:2px;background:#666;"></div>
<div style="position:absolute;left:2343px;top:1317px;width:1.6px;height:11px;background:#666;"></div>
<div style="position:absolute;left:2354px;top:1312px;width:10px;height:22px;background:#666;"></div>
<div style="position:absolute;left:2453.5px;top:1321.5px;width:15.5px;height:1.6px;background:#333;"></div>
<div style="position:absolute;left:2460.5px;top:1315px;width:1.6px;height:15.5px;background:#333;"></div>
<div class="t" style="left:2496px;top:1314.15px;font-size:20.5px;color:#333;font-weight:400;transform:scaleX(0.9155);">160%</div>
<div style="position:absolute;left:747px;top:106px;width:446px;height:925px;box-sizing:border-box;background:#fff;border:1.5px solid #c8c6c4;border-radius:8px;box-shadow:0 5px 12px rgba(0,0,0,0.2);"></div>
<div style="position:absolute;left:758px;top:117px;width:424px;height:56px;box-sizing:border-box;border:2px solid #808080;background:#fff;"></div>
<div class="t" style="left:784px;top:133.28px;font-size:24px;color:#707070;font-weight:400;transform:scaleX(1.0202);">Пошук у меню</div>
<div style="position:absolute;left:750px;top:669px;width:440px;height:57px;background:#f3f3f3;"></div>
<div style="position:absolute;left:750px;top:732px;width:440px;height:57px;background:#f3f3f3;"></div>
<div style="position:absolute;left:814px;top:241px;width:376px;height:2px;background:#d4d4d4;"></div>
<div style="position:absolute;left:814px;top:491px;width:376px;height:2px;background:#d4d4d4;"></div>
<div style="position:absolute;left:814px;top:792px;width:376px;height:2px;background:#d4d4d4;"></div>
<div style="position:absolute;left:814px;top:967px;width:376px;height:2px;background:#d4d4d4;"></div>
<svg style="position:absolute;left:773px;top:193px;" width="32" height="33" viewBox="0 0 32 33" fill="none"><path d="M1.8 31 C2.3 26 3.5 22.5 6 19 L19.8 1.2 L25.8 4.6 L11 25 C8.5 28 5 30 1.8 31 Z" stroke="#1d5fc9" stroke-width="2.3" fill="#fff" stroke-linejoin="round"/>
<path d="M22 12 H29.6 M16.5 17.9 H25.6 M12 23.8 H21.8" stroke="#1d5fc9" stroke-width="3.4" stroke-linecap="round"/>
<path d="M21 12 H23 M15.5 17.9 H18 M11 23.8 H14" stroke="#1d5fc9" stroke-width="3.4"/></svg>
<div class="t" style="left:823.3px;top:198.68px;font-size:24px;color:#242424;font-weight:400;transform:scaleX(0.9863);">Перевірити виділений фраг...</div>
<svg style="position:absolute;left:778px;top:257px;" width="24" height="32" viewBox="0 0 24 32" fill="none"><path d="M7 1 L19 24 M17 1 L5 24" stroke="#333" stroke-width="1.6"/>
<circle cx="5.5" cy="27.5" r="3" stroke="#1e8ad6" stroke-width="2" fill="#fff"/>
<circle cx="18.5" cy="27.5" r="3" stroke="#1e8ad6" stroke-width="2" fill="#fff"/></svg>
<div class="t" style="left:823.3px;top:261.68px;font-size:24px;color:#242424;font-weight:400;transform:scaleX(0.9656);">В<u>и</u>різати</div>
<svg style="position:absolute;left:774px;top:315px;" width="33" height="33" viewBox="0 0 33 33" fill="none"><path d="M10 27 H1 V1 H13 L16 4" stroke="#333" stroke-width="2" fill="none"/>
<path d="M13 8 H24 L31 15 V31 H13 Z M24 8 V15 H31" stroke="#333" stroke-width="2" fill="#fafafa" stroke-linejoin="miter"/>
<path d="M17 22 H26 M17 26 H26" stroke="#555" stroke-width="1.5"/></svg>
<div class="t" style="left:823.3px;top:320.08px;font-size:24px;color:#242424;font-weight:400;transform:scaleX(1.0119);">Копі<u>ю</u>вати</div>
<svg style="position:absolute;left:777px;top:371px;" width="30" height="34" viewBox="0 0 30 34" fill="none"><g transform="scale(0.725)" stroke-width="2.76">
<path d="M18 43 H2 V7.2 H30.8 V18" stroke="#fbd98c" fill="#fafafa"/>
<path d="M18 43.9 H1.1 V6.2 H31.7 V18" stroke="#e06c00" fill="none"/>
<path d="M7.3 7 V13.6 H24.8 V7 H20.5 A4.6 4.6 0 0 0 11.3 7 Z" stroke="#707070" fill="#f8f8f8"/>
<rect x="21.2" y="21.2" width="18.7" height="23.6" stroke="#2b2b2b" fill="#fafafa"/>
</g></svg>
<div class="t" style="left:825.7px;top:382.68px;font-size:24px;color:#242424;font-weight:700;transform:scaleX(0.9865);">Параметри вставлення:</div>
<svg style="position:absolute;left:828px;top:431px;" width="41" height="47" viewBox="0 0 41 47" fill="none"><g transform="scale(1.0)" stroke-width="2.00">
<path d="M18 43 H2 V7.2 H30.8 V18" stroke="#fbd98c" fill="#fafafa"/>
<path d="M18 43.9 H1.1 V6.2 H31.7 V18" stroke="#e06c00" fill="none"/>
<path d="M7.3 7 V13.6 H24.8 V7 H20.5 A4.6 4.6 0 0 0 11.3 7 Z" stroke="#707070" fill="#f8f8f8"/>
<rect x="21.2" y="21.2" width="18.7" height="23.6" stroke="#2b2b2b" fill="#fafafa"/>
</g></svg>
<div class="t" style="left:823.3px;top:512.58px;font-size:24px;color:#242424;font-weight:400;transform:scaleX(0.9402);"><u>В</u>ставити</div>
<svg style="position:absolute;left:1163px;top:514px;" width="11" height="18" viewBox="0 0 11 18" fill="none"><path d="M1 1 L9.5 9 L1 17" stroke="#333" stroke-width="1.8"/></svg>
<div class="t" style="left:823.3px;top:570.38px;font-size:24px;color:#242424;font-weight:400;transform:scaleX(0.9759);">Вид<u>а</u>лити рядки</div>
<svg style="position:absolute;left:774px;top:623px;" width="30" height="30" viewBox="0 0 30 30" fill="none"><rect x="1" y="1" width="28" height="28" stroke="#333" stroke-width="2" fill="#fafafa"/>
<path d="M15 2 V28" stroke="#555" stroke-width="2"/>
<rect x="2" y="11.5" width="26" height="7" fill="#fafafa"/>
<path d="M2 11 H28 M2 19 H28" stroke="#1059c2" stroke-width="2"/></svg>
<div class="t" style="left:823.3px;top:628.68px;font-size:24px;color:#242424;font-weight:400;transform:scaleX(1.0009);"><u>О</u>б’єднати клітинки</div>
<svg style="position:absolute;left:773px;top:681px;" width="31" height="30" viewBox="0 0 31 30" fill="none"><rect x="1" y="3" width="15" height="25" stroke="#6e6e6e" stroke-width="2" fill="#fafafa"/>
<path d="M2 15.5 H15" stroke="#bdbdbd" stroke-width="1.5"/>
<path d="M24.5 1 V29 M19 2 H30 M19 15.5 H30 M19 28 H30" stroke="#1e8ad6" stroke-width="2"/></svg>
<div class="t" style="left:823.3px;top:685.88px;font-size:24px;color:#242424;font-weight:400;transform:scaleX(0.9997);">Зрівняти <u>в</u>исоту рядків</div>
<svg style="position:absolute;left:773px;top:743px;" width="31" height="30" viewBox="0 0 31 30" fill="none"><rect x="3" y="14" width="26" height="15" stroke="#6e6e6e" stroke-width="2" fill="#fafafa"/>
<path d="M16 15 V28" stroke="#bdbdbd" stroke-width="1.5"/>
<path d="M1 5 H31 M2 1 V12 M15.5 1 V12 M29 1 V12" stroke="#1e8ad6" stroke-width="2"/></svg>
<div class="t" style="left:823.3px;top:748.98px;font-size:24px;color:#242424;font-weight:400;transform:scaleX(1.0096);">Зрівняти <u>ш</u>ирину стовпців</div>
<div style="position:absolute;left:777.5px;top:818.5px;width:25.5px;height:1.6px;background:#333;"></div>
<div class="t" style="left:823.3px;top:809.08px;font-size:24px;color:#242424;font-weight:400;transform:scaleX(0.9924);">Стилі ме<u>ж</u></div>
<div style="position:absolute;left:1144px;top:807px;width:1.6px;height:25.5px;background:#c8c8c8;"></div>
<svg style="position:absolute;left:1163px;top:809px;" width="11" height="20" viewBox="0 0 11 20" fill="none"><path d="M1 1 L9.5 10 L1 19" stroke="#333" stroke-width="1.8"/></svg>
<svg style="position:absolute;left:776px;top:861px;" width="30" height="32" viewBox="0 0 30 32" fill="none"><path d="M6 1 V30 M1 25 L6 30.5 L11 25" stroke="#333" stroke-width="2"/>
<path d="M20 17 V30 M15.5 25.5 L20 30.5 L24.5 25.5" stroke="#333" stroke-width="2"/>
<text x="12" y="15.5" font-family="Liberation Sans" font-size="20" fill="#1e8ad6">A</text></svg>
<div class="t" style="left:823.3px;top:866.98px;font-size:24px;color:#242424;font-weight:400;transform:scaleX(0.9850);"><u>Н</u>апрямок тексту...</div>
<svg style="position:absolute;left:774px;top:919px;" width="32" height="32" viewBox="0 0 32 32" fill="none"><rect x="1" y="1" width="30" height="30" stroke="#333" stroke-width="2" fill="#fafafa"/>
<rect x="2" y="2" width="28" height="5" fill="#999"/>
<path d="M2 7.5 H30 M10 8 V30 M2 16 H10 M2 23 H10 M20 8 V12" stroke="#555" stroke-width="1.8"/>
<rect x="14" y="13" width="17" height="18" stroke="#333" stroke-width="2" fill="#fafafa"/>
<rect x="17" y="17" width="3.5" height="3.5" fill="#1e8ad6"/><rect x="17" y="23.5" width="3.5" height="3.5" fill="#1e8ad6"/>
<path d="M22.5 19 H28 M22.5 25.5 H28" stroke="#1e8ad6" stroke-width="1.8"/></svg>
<div class="t" style="left:823.3px;top:924.68px;font-size:24px;color:#242424;font-weight:400;transform:scaleX(0.9540);">Влас<u>т</u>ивості таблиці...</div>
<svg style="position:absolute;left:774px;top:983px;" width="31" height="30" viewBox="0 0 31 30" fill="none"><path d="M13 4 H29 V20 H10 L4 26 V20 H2 V13" stroke="#333" stroke-width="2" fill="#fafafa" stroke-linejoin="miter"/>
<path d="M6 0.5 V11.5 M0.5 6 H11.5" stroke="#1f9a3a" stroke-width="2.2"/></svg>
<div class="t" style="left:823.3px;top:988.88px;font-size:24px;color:#242424;font-weight:400;transform:scaleX(1.0115);"><u>С</u>творити примітку</div>
<div style="position:absolute;left:747px;top:1064px;width:678px;height:128px;box-sizing:border-box;background:#fff;border:1.5px solid #c8c6c4;border-radius:8px;box-shadow:0 4px 10px rgba(0,0,0,0.16);"></div>
<div style="position:absolute;left:758.6px;top:1076px;width:210px;height:47px;box-sizing:border-box;border:2px solid #858585;border-radius:9px;background:#fff;"></div>
<div style="position:absolute;left:764px;top:1080px;width:175px;height:40px;overflow:hidden;"><div class="t" style="left:0;top:7.88px;font-size:24px;color:#242424;">Calibri (Основни</div></div>
<svg style="position:absolute;left:949px;top:1096px;" width="13" height="8" viewBox="0 0 13 8" fill="none"><path d="M1 1 L6.5 6.5 L12 1" stroke="#333" stroke-width="1.8"/></svg>
<div style="position:absolute;left:974px;top:1076px;width:91.5px;height:47px;box-sizing:border-box;border:2px solid #858585;border-radius:9px;background:#fff;"></div>
<div class="t" style="left:979.3px;top:1087.88px;font-size:24px;color:#242424;font-weight:400;transform:scaleX(0.9232);">11</div>
<svg style="position:absolute;left:1045.5px;top:1096px;" width="13" height="8" viewBox="0 0 13 8" fill="none"><path d="M1 1 L6.5 6.5 L12 1" stroke="#333" stroke-width="1.8"/></svg>
<svg style="position:absolute;left:1060px;top:1070px;" width="160" height="50" viewBox="0 0 160 50" fill="none"><path d="M18.5 38.5 L29 13.5 L39.5 38.5 M22 30.5 H36" stroke="#333" stroke-width="2.2" stroke-linejoin="miter"/>
<path d="M38.5 20.5 L43 15.5 L47.5 20.5" stroke="#1e8ad6" stroke-width="2"/>
<path d="M69.5 38.5 L77.5 19 L85.5 38.5 M72.5 31.5 H82.5" stroke="#333" stroke-width="2.1" stroke-linejoin="miter"/>
<path d="M86.3 15.5 L90.8 20 L95.3 15.5" stroke="#1e8ad6" stroke-width="2"/></svg>
<svg style="position:absolute;left:1172px;top:1082px;" width="34" height="32" viewBox="0 0 34 32" fill="none"><path d="M0.8 15 Q8 13.5 13.4 8.6 L24.6 19.8 L14 30.5 Z" stroke="#e07a10" stroke-width="2" fill="#fafafa" stroke-linejoin="miter"/>
<path d="M7 19.5 L20 22.5 L14.5 28 Z" fill="#fbd98c"/>
<path d="M5 18 Q14 21 21 23" stroke="#e07a10" stroke-width="1.8"/>
<path d="M13.5 8.5 L18.2 5.2 L27.5 14.5 L24.5 19.5 Z" stroke="#333" stroke-width="2" fill="#fafafa" stroke-linejoin="miter"/>
<path d="M19 7.5 L28 -1 A2.4 2.4 0 0 1 31.5 2.6 L23 11" stroke="#333" stroke-width="2" fill="#fff"/></svg>
<div style="position:absolute;left:1214.5px;top:1072px;width:1.6px;height:112px;background:#d4d4d4;"></div>
<svg style="position:absolute;left:1245px;top:1081px;" width="44" height="43" viewBox="0 0 44 43" fill="none"><path d="M10 32 H1 V1 H43 V32 H34" stroke="#333" stroke-width="2" fill="#fafafa"/>
<rect x="2" y="12" width="40" height="10" fill="#86bdea"/>
<path d="M2 12 H42 M2 22 H42" stroke="#0d5fb8" stroke-width="2"/>
<path d="M15 2 V11 M29 2 V11" stroke="#6e6e6e" stroke-width="1.8"/>
<rect x="19" y="17" width="6" height="26" fill="#fff"/>
<path d="M22 18 V41 M12 31 L22 41.5 L32 31" stroke="#333" stroke-width="2"/></svg>
<svg style="position:absolute;left:1295px;top:1098px;" width="11" height="7" viewBox="0 0 11 7" fill="none"><path d="M1 1 L5.5 5.5 L10 1" stroke="#333" stroke-width="1.8"/></svg>
<div class="t" style="left:1224.8px;top:1141.28px;font-size:24px;color:#242424;font-weight:400;transform:scaleX(0.8262);">Вставити</div>
<svg style="position:absolute;left:1346px;top:1081px;" width="47" height="44" viewBox="0 0 47 44" fill="none"><rect x="1" y="1" width="42" height="32" stroke="#333" stroke-width="2" fill="#fafafa"/>
<path d="M15 2 V32 M29 2 V17 M2 12 H42 M2 22 H22" stroke="#6e6e6e" stroke-width="1.8"/>
<rect x="22" y="17" width="25" height="27" fill="#fff"/>
<path d="M25 21 L45 42 M45 21 L25 42" stroke="#e8403a" stroke-width="2"/></svg>
<svg style="position:absolute;left:1400px;top:1098px;" width="11" height="7" viewBox="0 0 11 7" fill="none"><path d="M1 1 L5.5 5.5 L10 1" stroke="#333" stroke-width="1.8"/></svg>
<div class="t" style="left:1323.8px;top:1141.28px;font-size:24px;color:#242424;font-weight:400;transform:scaleX(0.8123);">Видалити</div>
<div class="t" style="left:766px;top:1141.49px;font-size:26px;color:#333;font-weight:700;transform:scaleX(1.1915);">Ж</div>
<div class="t" style="left:819px;top:1141.49px;font-size:26px;color:#333;font-weight:400;transform:scaleX(1.1885);font-style:italic;">К</div>
<svg style="position:absolute;left:861px;top:1142px;" width="29" height="27" viewBox="0 0 29 27" fill="none"><path d="M1 1.5 H28 M5 9 H24 M1 16.5 H28 M5 24.5 H24" stroke="#333" stroke-width="2"/></svg>
<svg style="position:absolute;left:908px;top:1140px;" width="33" height="32" viewBox="0 0 33 32" fill="none"><path d="M11.5 15.5 L24 3 A3 3 0 0 1 29 8 L16.5 20.5 Z" stroke="#333" stroke-width="1.8" fill="#f4f4f4" stroke-linejoin="round"/>
<path d="M11 15.5 L16.5 21 L12.5 22.5 L2 22.5 Z" fill="#6e6e6e"/>
<rect x="0" y="24" width="32" height="8" fill="#ffff00"/></svg>
<svg style="position:absolute;left:954.5px;top:1152.5px;" width="11" height="8" viewBox="0 0 11 8" fill="none"><path d="M1 1 L5.5 6 L10 1" stroke="#333" stroke-width="1.8"/></svg>
<svg style="position:absolute;left:986px;top:1140px;" width="33" height="32" viewBox="0 0 33 32" fill="none"><path d="M7 22 L16 0.8 L25 22 M10 15 H22" stroke="#333" stroke-width="2.1" stroke-linejoin="miter"/>
<rect x="0" y="24" width="32" height="8" fill="#ff0000"/></svg>
<svg style="position:absolute;left:1032.5px;top:1152.5px;" width="11" height="8" viewBox="0 0 11 8" fill="none"><path d="M1 1 L5.5 6 L10 1" stroke="#333" stroke-width="1.8"/></svg>
<svg style="position:absolute;left:1064px;top:1140px;" width="33" height="32" viewBox="0 0 33 32" fill="none"><path d="M12 6 L4.5 13.5 L14 23 L25 12 L21 8" stroke="#333" stroke-width="2" fill="#fafafa" stroke-linejoin="miter"/>
<path d="M19 12 V3.5 A2 2 0 0 0 15 3.5 V7" stroke="#333" stroke-width="2"/>
<path d="M23 8.5 C28 6.5 29.5 11 27.5 19.5 C27 14 26 12 23.5 11.5 Z" fill="#1059c2"/>
<rect x="0.5" y="24.5" width="31" height="7" stroke="#aaa" stroke-width="1" fill="#fff"/></svg>
<svg style="position:absolute;left:1110.5px;top:1152.5px;" width="11" height="8" viewBox="0 0 11 8" fill="none"><path d="M1 1 L5.5 6 L10 1" stroke="#333" stroke-width="1.8"/></svg>
<div style="position:absolute;left:1136.5px;top:1132px;width:73px;height:47px;box-sizing:border-box;border:2px solid #6e6e6e;border-radius:9px;background:#e9e9e9;"></div>
<svg style="position:absolute;left:1141px;top:1140px;" width="32" height="31" viewBox="0 0 32 31" fill="none"><rect x="1" y="1" width="30" height="28" fill="#f8f8f8"/><rect x="0.80" y="0.8" width="2" height="2" fill="#222"/><rect x="4.95" y="0.8" width="2" height="2" fill="#222"/><rect x="9.10" y="0.8" width="2" height="2" fill="#222"/><rect x="13.25" y="0.8" width="2" height="2" fill="#222"/><rect x="17.40" y="0.8" width="2" height="2" fill="#222"/><rect x="21.55" y="0.8" width="2" height="2" fill="#222"/><rect x="25.70" y="0.8" width="2" height="2" fill="#222"/><rect x="29.85" y="0.8" width="2" height="2" fill="#222"/><rect x="0.80" y="4.95" width="2" height="2" fill="#222"/><rect x="15.30" y="4.95" width="2" height="2" fill="#222"/><rect x="29.40" y="4.95" width="2" height="2" fill="#222"/><rect x="0.80" y="9.10" width="2" height="2" fill="#222"/><rect x="15.30" y="9.10" width="2" height="2" fill="#222"/><rect x="29.40" y="9.10" width="2" height="2" fill="#222"/><rect x="0.80" y="13.25" width="2" height="2" fill="#222"/><rect x="15.30" y="13.25" width="2" height="2" fill="#222"/><rect x="29.40" y="13.25" width="2" height="2" fill="#222"/><rect x="0.80" y="17.40" width="2" height="2" fill="#222"/><rect x="15.30" y="17.40" width="2" height="2" fill="#222"/><rect x="29.40" y="17.40" width="2" height="2" fill="#222"/><rect x="0.80" y="21.55" width="2" height="2" fill="#222"/><rect x="15.30" y="21.55" width="2" height="2" fill="#222"/><rect x="29.40" y="21.55" width="2" height="2" fill="#222"/><rect x="0.80" y="25.70" width="2" height="2" fill="#222"/><rect x="15.30" y="25.70" width="2" height="2" fill="#222"/><rect x="29.40" y="25.70" width="2" height="2" fill="#222"/><rect x="4.95" y="14.3" width="2" height="2" fill="#222"/><rect x="9.10" y="14.3" width="2" height="2" fill="#222"/><rect x="13.25" y="14.3" width="2" height="2" fill="#222"/><rect x="17.40" y="14.3" width="2" height="2" fill="#222"/><rect x="21.55" y="14.3" width="2" height="2" fill="#222"/><rect x="25.70" y="14.3" width="2" height="2" fill="#222"/>
<rect x="0.8" y="28" width="31" height="2.6" fill="#111"/></svg>
<svg style="position:absolute;left:1188.5px;top:1153px;" width="12" height="8" viewBox="0 0 12 8" fill="none"><path d="M1 1 L6 6 L11 1" stroke="#333" stroke-width="1.8"/></svg>
</body></html>
